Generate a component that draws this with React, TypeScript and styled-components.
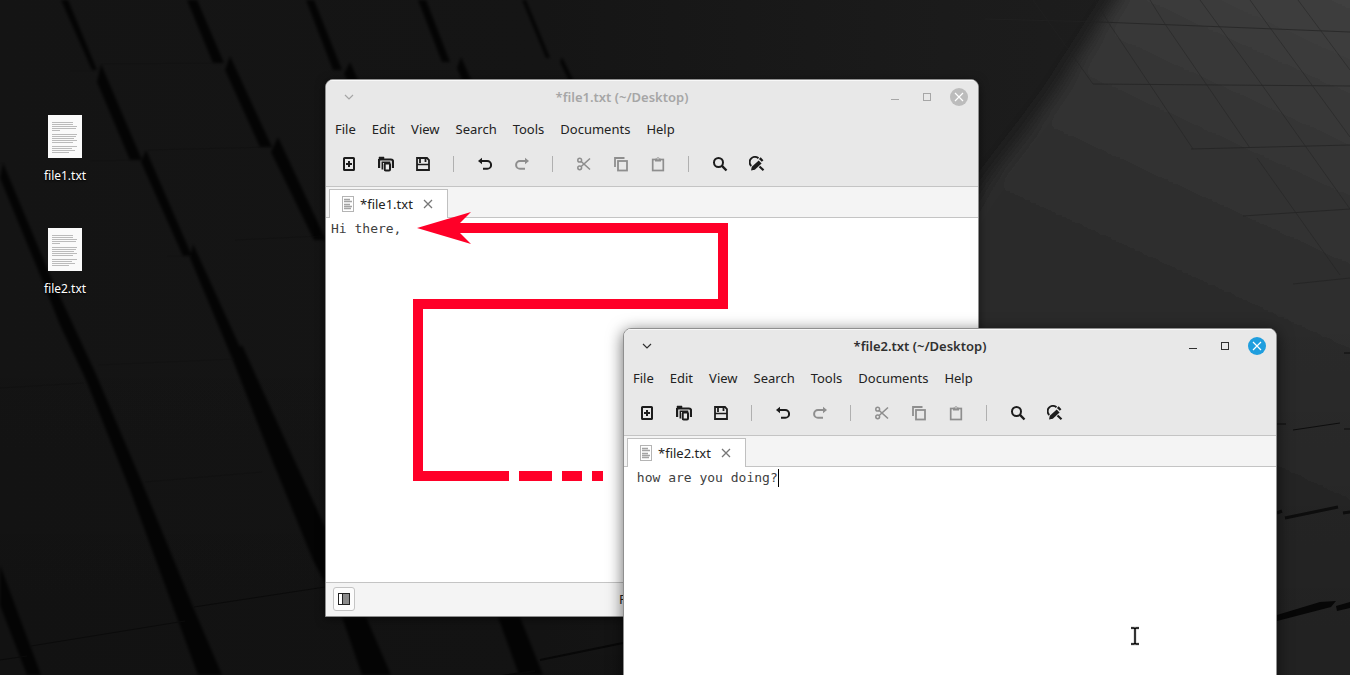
import React, { useState } from "react";
import styled, { createGlobalStyle, css } from "styled-components";

const GlobalStyle = createGlobalStyle`
  *, *::before, *::after { box-sizing: border-box; }
  body {
    margin: 0;
    background: #141414;
    font-family: "Noto Sans", "Open Sans", sans-serif;
    font-size: 13px;
    line-height: 18px;
    color: #222;
  }
`;

const Desktop = styled.main`
  position: relative;
  height: 100vh;
  overflow: hidden;
`;

const WallpaperArt = styled.svg`
  position: absolute;
  inset: 0;
  width: 100%;
  height: 100%;
`;

const IconList = styled.ul`
  position: relative;
  display: flex;
  flex-direction: column;
  gap: 41px;
  width: 130px;
  margin: 0;
  padding: 115px 0 0;
  list-style: none;
`;

const DesktopFile = styled.button`
  display: flex;
  flex-direction: column;
  align-items: center;
  justify-content: flex-start;
  gap: 9px;
  width: 100%;
  height: 72px;
  padding: 0;
  border: 0;
  background: none;
  color: #fff;
  font: inherit;
  font-size: 12px;
  text-shadow: 0 1px 2px #000;
`;

const Window = styled.section<{ $x: number; $y: number; $active?: boolean }>`
  position: absolute;
  left: ${(p) => p.$x}px;
  top: ${(p) => p.$y}px;
  display: flex;
  flex-direction: column;
  width: 654px;
  height: 538px;
  border: 1px solid #8f8f8f;
  border-radius: 8px 8px 0 0;
  background: #fff;
  overflow: hidden;
  box-shadow: ${(p) => (p.$active ? "0 3px 16px rgba(0,0,0,0.6)" : "0 2px 10px rgba(0,0,0,0.5)")};
`;

const TitleBar = styled.header<{ $active?: boolean }>`
  display: flex;
  align-items: center;
  flex: none;
  height: 34px;
  padding: 0 7px 2px 11px;
  gap: 8px;
  border-top: 1px solid #f8f8f8;
  background: #e8e8e8;
  color: ${(p) => (p.$active ? "#303030" : "#a6a6a6")};
`;

const Title = styled.h1`
  flex: 1;
  margin: 0;
  font-size: 13px;
  line-height: 18px;
  font-weight: 600;
  text-align: center;
`;

const WindowButton = styled.button`
  display: grid;
  place-items: center;
  width: 24px;
  height: 24px;
  padding: 0;
  border: 0;
  background: none;
  color: inherit;
`;

const MenuBar = styled.nav`
  display: flex;
  flex: none;
  height: 30px;
  padding-left: 1px;
  background: #e8e8e8;
`;

const MenuItem = styled.button`
  padding: 0 8px;
  border: 0;
  background: none;
  color: #222;
  font: inherit;
`;

const ToolBar = styled.div`
  display: flex;
  align-items: center;
  flex: none;
  height: 43px;
  padding-left: 4px;
  padding-bottom: 2px;
  border-bottom: 1px solid #c4c4c4;
  background: #e8e8e8;
`;

const ToolButton = styled.button`
  display: grid;
  place-items: center;
  width: 37px;
  height: 32px;
  padding: 0;
  border: 0;
  background: none;
  color: #1c1c1c;

  &:disabled {
    color: #8e8e8e;
  }
`;

const Divider = styled.span`
  width: 1px;
  height: 16px;
  margin: 0 12px;
  background: #b0b0b0;
`;

const TabStrip = styled.div`
  display: flex;
  align-items: flex-end;
  flex: none;
  height: 31px;
  padding-left: 3px;
  background: #f4f4f4;
  box-shadow: inset 0 -1px #c4c4c4;
`;

const Tab = styled.div`
  display: flex;
  align-items: center;
  width: 119px;
  height: 29px;
  padding: 0 12px;
  border: 1px solid #c0c0c0;
  border-bottom: 0;
  background: #fff;
`;

const TabLabel = styled.span`
  flex: 1;
  padding-left: 6px;
  white-space: nowrap;
`;

const TabClose = styled.button`
  display: grid;
  place-items: center;
  width: 14px;
  height: 16px;
  padding: 0;
  border: 0;
  background: none;
  color: #777;
`;

const editorFont = css`
  font-family: "DejaVu Sans Mono", monospace;
  font-size: 13px;
  line-height: 18px;
`;

const EditorPane = styled.div`
  position: relative;
  display: flex;
  flex: 1;
`;

const TextArea = styled.textarea`
  flex: 1;
  padding: 2px 5px;
  border: 0;
  outline: 0;
  resize: none;
  background: #fff;
  color: #404040;
  ${editorFont}
`;

const Caret = styled.span<{ $column: number }>`
  position: absolute;
  top: 2px;
  left: calc(5px + ${(p) => p.$column}ch);
  width: 1px;
  height: 18px;
  background: #000;
  ${editorFont}
`;

const StatusBar = styled.footer`
  display: flex;
  align-items: center;
  flex: none;
  height: 34px;
  padding-left: 7px;
  padding-bottom: 2px;
  border-top: 1px solid #c4c4c4;
  background: #f4f4f4;
`;

const PaneToggle = styled.button`
  display: grid;
  place-items: center;
  width: 22px;
  height: 24px;
  padding: 0;
  border: 1px solid #c4c4c4;
  border-radius: 3px;
  background: #fcfcfc;
`;

const SyntaxMode = styled.span`
  margin-left: 264px;
`;

const ArrowArt = styled.svg`
  position: absolute;
  left: 413px;
  top: 210px;
  pointer-events: none;
`;

const PointerArt = styled.svg`
  position: absolute;
  left: 1129px;
  top: 624px;
  pointer-events: none;
`;

type GlyphName =
  | "new" | "open" | "save" | "undo" | "redo" | "cut" | "copy" | "paste" | "find" | "replace";

const glyphs: Record<GlyphName, React.ReactNode> = {
  new: (
    <>
      <rect x="3" y="2" width="10" height="12" rx="0.6" />
      <path d="M8 5v6M5 8h6" />
    </>
  ),
  open: (
    <>
      <path d="M1.100 12V3M1 3.500h12q2 0 2 2V12" strokeWidth="2.200" />
      <path d="M1 1h5v2H1z" fill="currentColor" strokeWidth="0.500" />
      <path d="M4.300 13.500V6.300h8" strokeWidth="1.500" />
      <rect x="6.700" y="7.500" width="5.300" height="7" rx="1" strokeWidth="2" />
    </>
  ),
  save: (
    <>
      <path d="M2 2h10l2 2v10H2z" strokeWidth="1.800" />
      <path d="M2 8.500h12" strokeWidth="1.700" />
      <path d="M5 2v5M10.500 3v3" strokeWidth="1.800" />
    </>
  ),
  undo: (
    <>
      <path d="M4 5h6.200a3.700 3.700 0 0 1 0 7.800H6" />
      <path d="M1 5l4-3.300v6.600z" fill="currentColor" stroke="none" />
    </>
  ),
  redo: (
    <>
      <path d="M12 5H6a3.700 3.700 0 0 0 0 7.800h5" />
      <path d="M15 5l-4-3.300v6.600z" fill="currentColor" stroke="none" />
    </>
  ),
  cut: (
    <>
      <circle cx="3.700" cy="4.200" r="1.900" strokeWidth="1.500" />
      <circle cx="3.700" cy="11.800" r="1.900" strokeWidth="1.500" />
      <path d="M5.200 5.500L14 13.500M5.200 10.500L14 2.500" strokeWidth="1.600" />
    </>
  ),
  copy: (
    <>
      <path d="M2 11V2h9.500" strokeWidth="1.800" />
      <rect x="5" y="5" width="9" height="9.500" strokeWidth="1.800" />
    </>
  ),
  paste: (
    <>
      <rect x="2.700" y="3.500" width="10.600" height="11" strokeWidth="1.700" />
      <path d="M5 5.500V2.800h1.500a1.500 1.500 0 0 1 3 0H11v2.700z" fill="currentColor" stroke="none" />
      <circle cx="8" cy="2.800" r="0.700" fill="#e8e8e8" stroke="none" />
    </>
  ),
  find: (
    <>
      <circle cx="6.500" cy="6.500" r="4.500" />
      <path d="M9.700 9.700l4.800 4.800" strokeWidth="2.400" />
    </>
  ),
  replace: (
    <>
      <path d="M2.300 10A5.200 5.200 0 0 1 9.500 2.300" strokeWidth="1.900" />
      <path d="M2 14.500l0.800-3.800L9.700 4.500l2.900 3L5.800 13.700z" fill="currentColor" stroke="none" />
      <path d="M10.800 2.200l2.800 2.800" strokeWidth="2.400" />
      <path d="M10.500 10.500l4 3.700" strokeWidth="2.200" />
    </>
  ),
};

const Glyph = ({ name }: { name: GlyphName }) => (
  <svg width="16" height="16" viewBox="0 0 16 16" fill="none" stroke="currentColor" strokeWidth="2" aria-hidden="true">
    {glyphs[name]}
  </svg>
);

const DocumentIcon = () => (
  <svg width="34" height="43" viewBox="0 0 34 43" aria-hidden="true">
    <path fill="#fafafa" d="M0 0h34v43H0z" />
    <path
      stroke="#a6a6a6"
      fill="none"
      d="M4 7.500h21M4 9.500h21M4 11.500h25M4 13.500h24M4 15.500h8M4 19.500h25M4 21.500h24M4 23.500h22M4 25.500h25M4 27.500h21M4 31.500h25M4 33.500h20M4 35.500h23M4 37.500h17"
      strokeOpacity="0.75"
    />
  </svg>
);

const TabIcon = () => (
  <svg width="12" height="16" viewBox="0 0 12 16" fill="none" aria-hidden="true">
    <rect x="0.500" y="0.500" width="11" height="15" stroke="#b4b4b4" />
    <path stroke="#a4a4a4" strokeWidth="1.400" d="M2 3.500h6M2 5.500h8M2 8.500h6M2 10.500h8M2 12.500h7" />
  </svg>
);

const menus = ["File", "Edit", "View", "Search", "Tools", "Documents", "Help"];

type Tool = { name: GlyphName; label: string; off?: boolean };
const toolGroups: Tool[][] = [
  [
    { name: "new", label: "New" },
    { name: "open", label: "Open" },
    { name: "save", label: "Save" },
  ],
  [
    { name: "undo", label: "Undo" },
    { name: "redo", label: "Redo", off: true },
  ],
  [
    { name: "cut", label: "Cut", off: true },
    { name: "copy", label: "Copy", off: true },
    { name: "paste", label: "Paste", off: true },
  ],
  [
    { name: "find", label: "Find" },
    { name: "replace", label: "Find and replace" },
  ],
];

type EditorProps = { file: string; text: string; x: number; y: number; mode?: string; active?: boolean };

const EditorWindow = ({ file, text, x, y, mode, active }: EditorProps) => {
  const [value, setValue] = useState(text);
  return (
    <Window $x={x} $y={y} $active={active} aria-label={file}>
      <TitleBar $active={active}>
        <WindowButton aria-label="Window menu">
          <svg width="10" height="6" fill="none" stroke="currentColor" strokeWidth="1.200">
            <path d="M1 1l4 4 4-4" />
          </svg>
        </WindowButton>
        <Title>*{file} (~/Desktop)</Title>
        <WindowButton aria-label="Minimise">
          <svg width="8" height="8" stroke="currentColor">
            <path d="M0 6.500h8" />
          </svg>
        </WindowButton>
        <WindowButton aria-label="Maximise">
          <svg width="8" height="8" fill="none" stroke="currentColor">
            <rect x="0.500" y="0.500" width="7" height="7" />
          </svg>
        </WindowButton>
        <WindowButton aria-label="Close">
          <svg width="18" height="18" stroke="#fff" strokeWidth="1.200">
            <circle cx="9" cy="9" r="9" stroke="none" fill={active ? "#1f9ede" : "#bcbcbc"} />
            <path d="M5 5l8 8M13 5l-8 8" />
          </svg>
        </WindowButton>
      </TitleBar>
      <MenuBar>
        {menus.map((m) => (
          <MenuItem key={m}>{m}</MenuItem>
        ))}
      </MenuBar>
      <ToolBar>
        {toolGroups.map((group, i) => (
          <React.Fragment key={i}>
            {i > 0 && <Divider />}
            {group.map((t) => (
              <ToolButton key={t.name} aria-label={t.label} disabled={t.off}>
                <Glyph name={t.name} />
              </ToolButton>
            ))}
          </React.Fragment>
        ))}
      </ToolBar>
      <TabStrip>
        <Tab>
          <TabIcon />
          <TabLabel>*{file}</TabLabel>
          <TabClose aria-label="Close tab">
            <svg width="10" height="10" fill="none" stroke="currentColor" strokeWidth="1.300">
              <path d="M1 1l8 8M9 1l-8 8" />
            </svg>
          </TabClose>
        </Tab>
      </TabStrip>
      <EditorPane>
        <TextArea
          aria-label={`${file} contents`}
          spellCheck={false}
          value={value}
          onChange={(e) => setValue(e.target.value)}
        />
        {active && <Caret $column={value.length} />}
      </EditorPane>
      <StatusBar>
        <PaneToggle aria-label="Side pane">
          <svg width="12" height="12" aria-hidden="true">
            <rect x="0.500" y="0.500" width="11" height="11" fill="#fff" stroke="#222" />
            <path d="M5 1h6v10H5z" fill="#8a8a8a" />
            <path d="M4.500 0v12" stroke="#222" />
          </svg>
        </PaneToggle>
        {mode && <SyntaxMode>{mode}</SyntaxMode>}
      </StatusBar>
    </Window>
  );
};

const grooves = [
  "M61 0h7L97 70h-5z",
  "M101 64L142 160h-12L97 82z",
  "M187 0h10L224 63h-11z",
  "M230 56L272 147h-12L225 70z",
  "M306 0h8L342 70h-9z",
  "M278 137L326 240h-12L271 152z",
  "M146 150L192 256h-9L141 162z",
  "M193 244L240 347L242 345L292 455L326 529V585L313 560L270 455L232 358L190 258z",
  "M3 163L50 275L95 372L143 485L193 607L222 675H198L165 585L130 490L86 380L60 325L38 270L0 178z",
  "M0 565L41 675H27L0 605z",
  "M342 617h24L391 675h-29z",
  "M498 617h22L543 675h-24z",
  "M418 0h8L450 62h-8z",
  "M461 57L480 100h-10L457 68z",
  "M522 0h4L550 58h-4z",
  "M562 57L583 100h-5L560 62z",
  "M350 62L367 100h-10L344 74z",
];

const Wallpaper = () => (
  <WallpaperArt viewBox="0 0 1350 675" preserveAspectRatio="xMidYMid slice" aria-hidden="true">
    <defs>
      <linearGradient id="base" x1="0" y1="0" x2="1" y2="0">
        <stop offset="0" stopColor="#141414" />
        <stop offset="0.400" stopColor="#151515" />
        <stop offset="0.700" stopColor="#1b1b1b" />
        <stop offset="1" stopColor="#1f1f1f" />
      </linearGradient>
      <linearGradient id="light" gradientUnits="userSpaceOnUse" x1="1350" y1="0" x2="1120" y2="500">
        <stop offset="0" stopColor="#3f3f3f" />
        <stop offset="0.450" stopColor="#2f2f2f" />
        <stop offset="0.750" stopColor="#292929" />
        <stop offset="1" stopColor="#272727" />
      </linearGradient>
      <linearGradient id="shade" x1="0" y1="0" x2="0" y2="1">
        <stop offset="0" stopColor="#000" stopOpacity="0" />
        <stop offset="1" stopColor="#000" stopOpacity="0.120" />
      </linearGradient>
      <filter id="edge" x="-20%" y="-20%" width="140%" height="140%">
        <feGaussianBlur stdDeviation="9" />
      </filter>
      <filter id="groove">
        <feGaussianBlur stdDeviation="1.500" />
      </filter>
    </defs>
    <path fill="url(#base)" d="M0 0h1350v675H0z" />
    <path fill="url(#light)" filter="url(#edge)" d="M1142-40H1420V740H900V320L980 190L1050 100z" />
    <path fill="url(#shade)" d="M0 300h1350v375H0z" />
    <g fill="#030303" fillOpacity="0.800" filter="url(#groove)">
      {grooves.map((d) => (
        <path key={d} d={d} />
      ))}
    </g>
    <path fill="none" stroke="#0b0b0b" d="M31 646L185 621M194 607L325 587M0 660L27 656" />
    <path fill="none" stroke="#080808" strokeWidth="2" d="M540 660L623 643M495 677L535 671" />
    <path
      fill="none"
      stroke="#0f0f0f"
      d="M70 71h24M101 64L222 63M0 163h5M90 161L142 160M148 150L272 147M192 256h-25M235 240L322 236M0 388L84 383M98 365L235 359M145 482L262 472"
      opacity="0.400"
    />
    <g fill="none" stroke="#222" opacity="0.700">
      <path d="M985 19L1100 22L1350 32M1093 84L1350 86M1191 149L1350 145M1243 216L1350 209M1293 284L1350 278" />
      <path
        opacity="0.700"
        d="M1033 0L1093 84M1095 0L1110 25L1193 149M1150 0L1165 24L1250 148M1257 158L1340 275M1200 0L1262 85L1350 209M1250 0L1268 25L1350 137M1298 0L1350 70"
      />
    </g>
    <g fill="none" stroke="#0d0d0d">
      <path d="M1277 424h9M1293 430L1340 423M1344 429h6M1344 353h6" />
      <path strokeWidth="3" d="M1285 518L1338 507M1277 513l5-2M1343 513l7-1" />
    </g>
    <path fill="#070707" d="M1277 615L1320 602L1336 601L1331 607L1277 621zM1336 606L1350 602V608L1337 611z" />
  </WallpaperArt>
);

const App = () => (
  <>
    <GlobalStyle />
    <Desktop>
      <Wallpaper />
      <IconList>
        {["file1.txt", "file2.txt"].map((name) => (
          <li key={name}>
            <DesktopFile>
              <DocumentIcon />
              {name}
            </DesktopFile>
          </li>
        ))}
      </IconList>
      <EditorWindow file="file1.txt" text="Hi there," x={325} y={79} mode="Plain Text" />
      <ArrowArt width="316" height="272" fill="none" stroke="#ff0028" strokeWidth="10" aria-hidden="true">
        <path d="M36 18H310V94H5V266H96M106 266h33M149 266h20M179 266h11" />
        <path d="M4 18L58 2L42 18L58 34z" fill="#ff0028" stroke="none" />
      </ArrowArt>
      <EditorWindow file="file2.txt" text=" how are you doing?" x={623} y={328} active />
      <PointerArt width="12" height="24" fill="none" aria-hidden="true">
        <path stroke="#ccc" strokeWidth="3" d="M2 4h3l1 1 1-1h3M6 5v14M2 20h3l1-1 1 1h3" />
        <path stroke="#000" strokeWidth="1.500" d="M2 4h3l1 1 1-1h3M6 5v14M2 20h3l1-1 1 1h3" />
      </PointerArt>
    </Desktop>
  </>
);

export default App;
